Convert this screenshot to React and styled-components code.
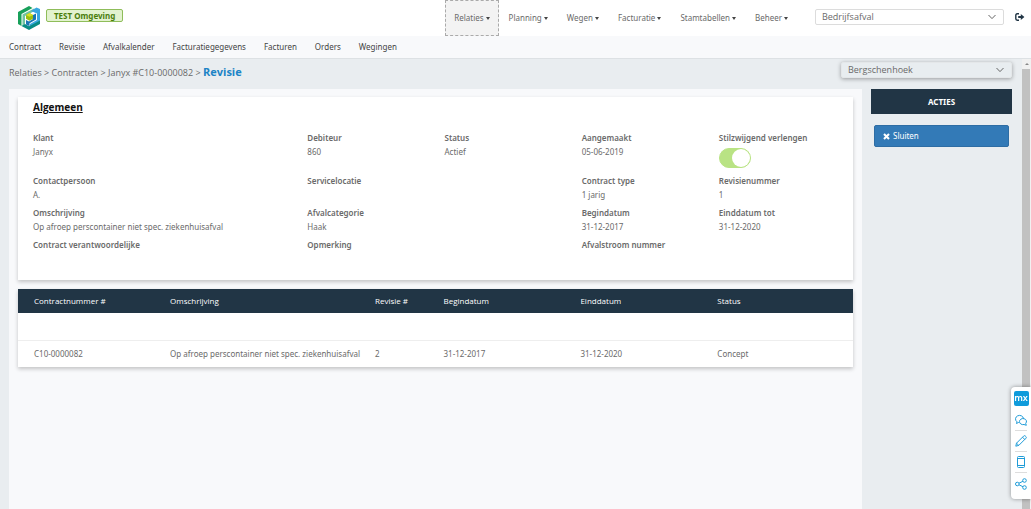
import React from "react";
import styled, { createGlobalStyle } from "styled-components";

const GlobalStyle = createGlobalStyle`
  *, *::before, *::after { box-sizing: border-box; }
  body {
    margin: 0;
    font-family: "Noto Sans", "Open Sans", sans-serif;
    font-size: 8px;
    line-height: 14px;
    color: #6a6a6a;
    background: #e9edf0;
  }
  button, input, select { font: inherit; color: inherit; }
`;

const Page = styled.div`
  display: flex;
  flex-direction: column;
  min-height: 100vh;
`;

const Header = styled.header`
  display: flex;
  align-items: center;
  height: 36px;
  padding: 0 6px 0 17px;
  background: #fff;
`;

const Logo = styled.svg`
  width: 24px;
  height: 24px;
`;

const EnvBadge = styled.span`
  align-self: flex-start;
  margin: 9px auto 0 5px;
  padding: 0 7px;
  height: 13px;
  line-height: 12px;
  border: 1px solid #8fbd5a;
  border-radius: 2px;
  background: #e2f2cf;
  color: #4a7d0c;
  font-weight: 700;
`;

const MainNav = styled.nav`
  display: flex;
  gap: 1px;
  height: 36px;
`;

const NavButton = styled.button`
  display: flex;
  align-items: center;
  gap: 2px;
  padding: 0 8px;
  border: 1px dashed ${(p) => (p.$active ? "#aaa" : "transparent")};
  background: ${(p) => (p.$active ? "#f3f3f3" : "transparent")};
  &::after {
    content: "";
    border: 2px solid transparent;
    border-top: 3px solid #444;
    border-bottom: 0;
  }
`;

const SelectWrap = styled.label`
  position: relative;
  display: block;
  width: ${(p) => p.$width};
  font-family: "Open Sans", sans-serif;
  font-size: 9px;
  svg {
    position: absolute;
    top: 5px;
    right: 8px;
    width: 8px;
    height: 6px;
    pointer-events: none;
  }
`;

const Select = styled.select`
  display: block;
  appearance: none;
  width: 100%;
  height: 16px;
  padding: 0 20px 0 6px;
  line-height: 14px;
  border: 1px solid ${(p) => (p.$raised ? "#e4e7e9" : "#dcdcdc")};
  border-radius: 2px;
  background: ${(p) => (p.$raised ? "#e8edf0" : "#fff")};
  box-shadow: ${(p) => (p.$raised ? "0 1px 4px rgba(0, 0, 0, 0.35)" : "none")};
`;

const HeaderTools = styled.div`
  display: flex;
  align-items: center;
  justify-content: space-between;
  width: 210px;
  margin: 0 0 2px 18px;
`;

const LogoutButton = styled.button`
  display: flex;
  padding: 0;
  border: 0;
  background: none;
  color: #213545;
  svg { width: 10px; height: 8px; }
`;

const SubNav = styled.nav`
  display: flex;
  align-items: center;
  gap: 18px;
  height: 23px;
  padding: 0 9px;
  border-bottom: 1px solid #dde1e4;
  background: #f8f9fb;
  a { color: #444; text-decoration: none; }
`;

const Workspace = styled.div`
  display: flex;
  flex: 1;
`;

const Body = styled.main`
  display: flex;
  flex: 1;
  flex-direction: column;
  padding: 0 10px 0 9px;
`;

const TopRow = styled.div`
  display: flex;
  align-items: flex-start;
  justify-content: space-between;
  height: 30px;
  padding-top: 3px;
`;

const Breadcrumb = styled.nav`
  padding-top: 3px;
  font-family: "Open Sans", sans-serif;
  font-size: 9px;
  a { color: inherit; text-decoration: none; }
  strong { color: #1c84c6; font-size: 11px; }
`;

const Columns = styled.div`
  display: flex;
  flex: 1;
  gap: 9px;
`;

const Panel = styled.div`
  display: flex;
  flex: 1;
  flex-direction: column;
  gap: 9px;
  padding: 8px 9px;
  background: #f8f9fb;
`;

const Card = styled.section`
  background: #fff;
  box-shadow: 0 2px 4px rgba(0, 0, 0, 0.22);
`;

const CardTitle = styled.h2`
  margin: 0 0 17px;
  padding: 3px 15px 0;
  color: #111;
  font-family: "Open Sans", sans-serif;
  font-size: 10px;
  line-height: 14px;
  text-decoration: underline;
`;

const Fields = styled.dl`
  display: grid;
  grid-template-columns: repeat(6, 1fr);
  row-gap: 4px;
  margin: 0;
  padding: 0 5px 14px 7px;
`;

const Field = styled.div`
  grid-column: ${(p) => p.$column} / span ${(p) => p.$span || 1};
  min-height: 28px;
  padding: 0 0 0 8px;
  white-space: nowrap;
  dt { font-weight: 600; }
  dd { margin: 0; }
`;

const Toggle = styled.input`
  display: block;
  appearance: none;
  width: 32px;
  height: 20px;
  margin: 3px 0 2px;
  border: 1px solid #b9e384;
  border-radius: 10px;
  background: #b9e384;
  &::before {
    content: "";
    display: block;
    width: 18px;
    height: 18px;
    margin-left: 12px;
    border-radius: 50%;
    background: #fff;
  }
`;

const Table = styled.table`
  width: 100%;
  table-layout: fixed;
  border-collapse: collapse;
  text-align: left;
  white-space: nowrap;
  th, td { padding: 0 0 0 8px; }
  th:first-child, td:first-child { padding-left: 16px; }
  th {
    height: 24px;
    background: #213545;
    color: #fff;
    font-family: "Open Sans", sans-serif;
    font-weight: 500;
  }
  td { height: 27px; border-bottom: 1px solid #eee; }
  tr:last-child td { border-bottom: 0; }
`;

const Sidebar = styled.aside`
  width: 141px;
`;

const SidebarTitle = styled.h2`
  margin: 0 0 11px;
  background: #213545;
  color: #fff;
  font-size: 8px;
  line-height: 25px;
  text-align: center;
`;

const ActionButton = styled.button`
  display: flex;
  align-items: center;
  gap: 3px;
  width: calc(100% - 6px);
  height: 22px;
  margin: 0 3px;
  padding: 0 8px;
  border: 1px solid #2e6da4;
  border-radius: 2px;
  background: #337ab7;
  color: #fff;
  svg { width: 7px; height: 7px; }
`;

const ScrollTrack = styled.div`
  display: flex;
  flex-direction: column;
  width: 9px;
  background: #f1f1f1;
  &::before {
    content: "";
    margin: 4px auto 3px;
    border: 2px solid transparent;
    border-bottom-color: #888;
    border-top: 0;
  }
  &::after {
    content: "";
    flex: 1;
    margin: 1px 1px 0 0;
    background: #c1c1c1;
  }
`;

const Feedback = styled.aside`
  position: fixed;
  right: 0;
  bottom: 10px;
  display: flex;
  flex-direction: column;
  align-items: center;
  width: 20px;
  padding: 4px 0 5px;
  border-radius: 4px 0 0 4px;
  background: #fff;
  box-shadow: 0 0 4px rgba(0, 0, 0, 0.4);
`;

const MxBadge = styled.span`
  width: 15px;
  height: 15px;
  margin-bottom: 4px;
  border-radius: 2px;
  background: #0f9bdb;
  color: #fff;
  font-size: 9px;
  font-weight: 600;
  line-height: 13px;
  text-align: center;
`;

const FeedbackButton = styled.button`
  display: flex;
  align-items: center;
  justify-content: center;
  width: 12px;
  height: 21px;
  padding: 0;
  border: 0;
  border-bottom: 1px solid #ddd;
  background: none;
  &:last-child { border-bottom: 0; }
  svg {
    flex: none;
    width: 12px;
    height: 12px;
    fill: none;
    stroke: #1f9cd8;
    stroke-width: 1;
    stroke-linejoin: round;
  }
`;

const Chevron = () => (
  <svg viewBox="0 0 8 6" fill="none" stroke="#666" aria-hidden="true">
    <path d="M0.5 1 L4 4.6 L7.5 1" />
  </svg>
);

const LogoutIcon = () => (
  <svg viewBox="0 0 10 8" aria-hidden="true">
    <path d="M4 0.800 H2.200 Q0.800 0.800 0.800 2.200 V5.800 Q0.800 7.200 2.200 7.200 H4" fill="none" stroke="currentColor" strokeWidth="1.400" />
    <path d="M3.200 2.900 H5.800 V1 L9.400 4 L5.800 7 V5.100 H3.200 Z" fill="currentColor" />
  </svg>
);

const CloseIcon = () => (
  <svg viewBox="0 0 7 7" aria-hidden="true">
    <path d="M1 1 L6 6 M6 1 L1 6" fill="none" stroke="currentColor" strokeWidth="2.100" />
  </svg>
);

const BrandMark = () => (
  <Logo viewBox="0 0 24 24" role="img" aria-label="Logo">
    <path d="M12 0 L1 6 V18 L4.500 20 V8 L15.500 2 Z" fill="#18a05a" />
    <path d="M5.500 8.500 L17 2.500 L19.500 4 L8 10 V18.500 L5.500 20 Z" fill="#6fc3a0" />
    <path d="M19.500 1.500 L23 3 V15.500 L13 21 V18 L20 14 V7.500 L14 5 Z" fill="#38a7df" />
    <path d="M4.500 20 L8 18 L12 20.300 L23 14.500 V18 L12 24 Z" fill="#078c85" />
    <path d="M16 9 L19 7.500 V13.500 L12.500 17.200 V20.200 L9 18.500 V14 L12 15.500 L16 13 Z" fill="#1875b4" />
    <path d="M9 9 L12.500 7 L16 9 V12.800 L12.500 14.700 L9 12.800 Z" fill="#9abf10" />
    <path d="M9 9 L12.500 7 L16 9 L12.500 10.700 Z" fill="#d8df26" />
  </Logo>
);

const menus = ["Relaties", "Planning", "Wegen", "Facturatie", "Stamtabellen", "Beheer"];
const tabs = ["Contract", "Revisie", "Afvalkalender", "Facturatiegegevens", "Facturen", "Orders", "Wegingen"];

const fields = [
  { label: "Klant", value: "Janyx", column: 1, span: 2 },
  { label: "Debiteur", value: "860", column: 3 },
  { label: "Status", value: "Actief", column: 4 },
  { label: "Aangemaakt", value: "05-06-2019", column: 5 },
  { label: "Stilzwijgend verlengen", toggle: true, column: 6 },
  { label: "Contactpersoon", value: "A.", column: 1, span: 2 },
  { label: "Servicelocatie", column: 3, span: 2 },
  { label: "Contract type", value: "1 jarig", column: 5 },
  { label: "Revisienummer", value: "1", column: 6 },
  { label: "Omschrijving", value: "Op afroep perscontainer niet spec. ziekenhuisafval", column: 1, span: 2 },
  { label: "Afvalcategorie", value: "Haak", column: 3, span: 2 },
  { label: "Begindatum", value: "31-12-2017", column: 5 },
  { label: "Einddatum tot", value: "31-12-2020", column: 6 },
  { label: "Contract verantwoordelijke", column: 1, span: 2 },
  { label: "Opmerking", column: 3, span: 2 },
  { label: "Afvalstroom nummer", column: 5, span: 2 },
];

const tableColumns = [
  ["Contractnummer #", "17.25%"],
  ["Omschrijving", "24.55%"],
  ["Revisie #", "8.2%"],
  ["Begindatum", "16.4%"],
  ["Einddatum", "16.4%"],
  ["Status", "17.2%"],
];
const revision = ["C10-0000082", "Op afroep perscontainer niet spec. ziekenhuisafval", "2", "31-12-2017", "31-12-2020", "Concept"];

export default function App() {
  return (
    <Page>
      <GlobalStyle />
      <Header>
        <BrandMark />
        <EnvBadge>TEST Omgeving</EnvBadge>
        <MainNav>
          {menus.map((name, i) => (
            <NavButton key={name} type="button" $active={i === 0}>{name}</NavButton>
          ))}
        </MainNav>
        <HeaderTools>
          <SelectWrap $width="189px">
            <Select aria-label="Afdeling"><option>Bedrijfsafval</option></Select>
            <Chevron />
          </SelectWrap>
          <LogoutButton type="button" aria-label="Uitloggen"><LogoutIcon /></LogoutButton>
        </HeaderTools>
      </Header>
      <SubNav>
        {tabs.map((name) => <a key={name} href="#">{name}</a>)}
      </SubNav>
      <Workspace>
        <Body>
          <TopRow>
            <Breadcrumb>
              <a href="#">Relaties</a> &gt; <a href="#">Contracten</a> &gt; <a href="#">Janyx #C10-0000082</a> &gt; <strong>Revisie</strong>
            </Breadcrumb>
            <SelectWrap $width="171px">
              <Select $raised aria-label="Vestiging"><option>Bergschenhoek</option></Select>
              <Chevron />
            </SelectWrap>
          </TopRow>
          <Columns>
            <Panel>
              <Card>
                <CardTitle>Algemeen</CardTitle>
                <Fields>
                  {fields.map((f) => (
                    <Field key={f.label} $column={f.column} $span={f.span}>
                      <dt>{f.toggle ? <label htmlFor="renew">{f.label}</label> : f.label}</dt>
                      <dd>{f.toggle ? <Toggle id="renew" type="checkbox" defaultChecked /> : f.value}</dd>
                    </Field>
                  ))}
                </Fields>
              </Card>
              <Card>
                <Table>
                  <colgroup>
                    {tableColumns.map(([name, width]) => <col key={name} style={{ width }} />)}
                  </colgroup>
                  <thead>
                    <tr>{tableColumns.map(([name]) => <th key={name} scope="col">{name}</th>)}</tr>
                  </thead>
                  <tbody>
                    <tr><td colSpan={6} /></tr>
                    <tr>{revision.map((value, i) => <td key={tableColumns[i][0]}>{value}</td>)}</tr>
                  </tbody>
                </Table>
              </Card>
            </Panel>
            <Sidebar>
              <SidebarTitle>ACTIES</SidebarTitle>
              <ActionButton type="button"><CloseIcon />Sluiten</ActionButton>
            </Sidebar>
          </Columns>
        </Body>
        <ScrollTrack />
      </Workspace>
      <Feedback>
        <MxBadge>mx</MxBadge>
        <FeedbackButton type="button" aria-label="Chat">
          <svg viewBox="0 0 12 12">
            <path d="M2 7.800 L1.500 9.500 L3.800 8.300 M2 7.800 A4 3.600 0 1 1 8.500 4.600" />
            <path d="M4.500 7.600 A3.500 2.900 0 1 1 10.700 9.300 L11.300 11.300 L9 10.500 A3.500 2.900 0 0 1 4.500 7.600 Z" />
          </svg>
        </FeedbackButton>
        <FeedbackButton type="button" aria-label="Bewerken">
          <svg viewBox="0 0 12 12">
            <path d="M0.800 11.200 L1.500 8.200 L8.800 0.900 Q9.600 0.300 10.400 1.100 L11 1.700 Q11.700 2.500 11 3.200 L3.800 10.400 Z M7.500 2.200 L9.800 4.500 M1.500 8.200 L3.800 10.400" />
          </svg>
        </FeedbackButton>
        <FeedbackButton type="button" aria-label="Mobiel">
          <svg viewBox="0 0 12 12">
            <path d="M3.500 0.500 H8.500 Q9.500 0.500 9.500 1.500 V10.500 Q9.500 11.500 8.500 11.500 H3.500 Q2.500 11.500 2.500 10.500 V1.500 Q2.500 0.500 3.500 0.500 Z M2.500 2.500 H9.500 M2.500 9.500 H9.500" />
          </svg>
        </FeedbackButton>
        <FeedbackButton type="button" aria-label="Delen">
          <svg viewBox="0 0 12 12">
            <circle cx="2.300" cy="6" r="1.800" />
            <circle cx="9.500" cy="2.500" r="1.800" />
            <circle cx="9.500" cy="9.500" r="1.800" />
            <path d="M4 5.200 L7.900 3.300 M4 6.800 L7.900 8.700" />
          </svg>
        </FeedbackButton>
      </Feedback>
    </Page>
  );
}
